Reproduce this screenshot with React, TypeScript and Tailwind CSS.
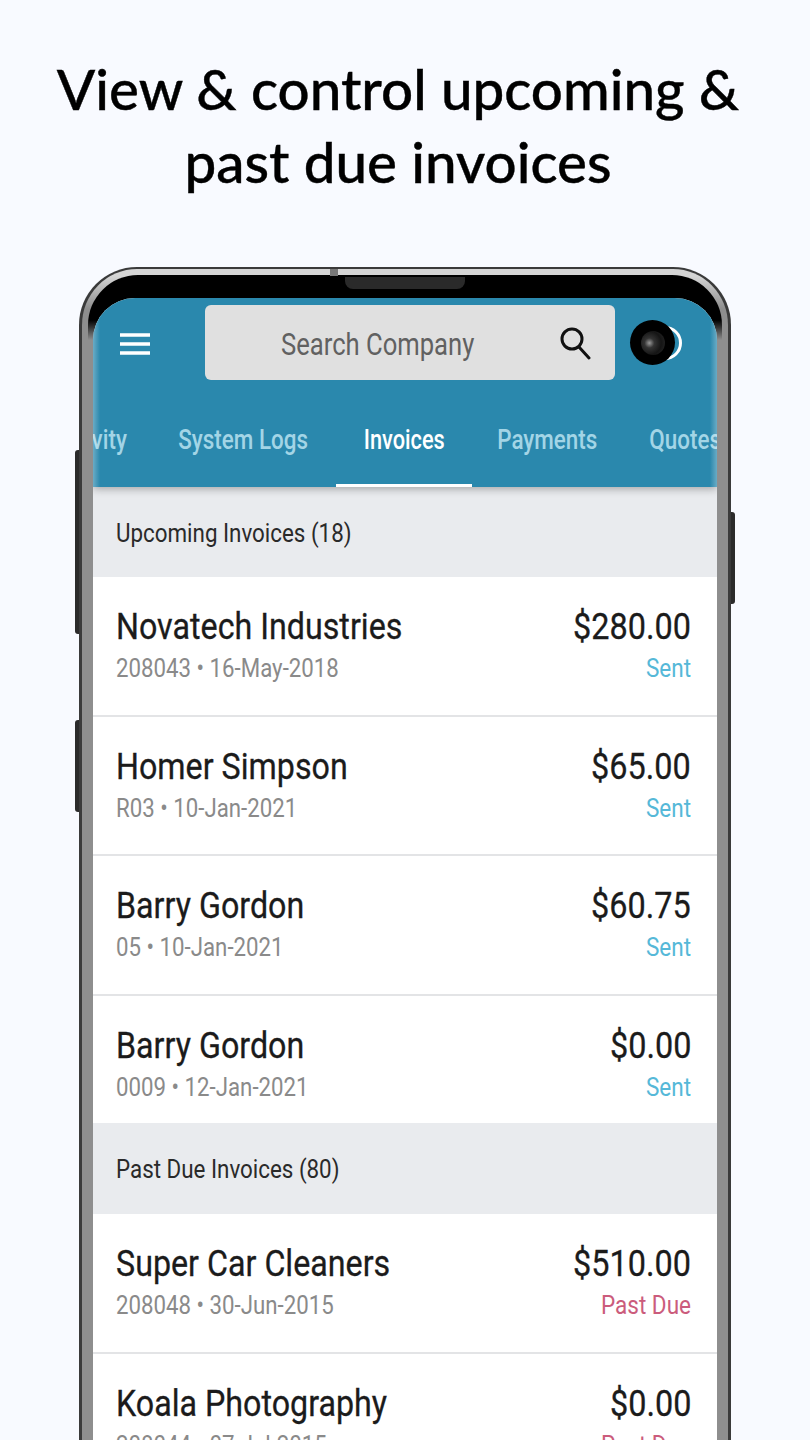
const upcoming = [
  { name: 'Novatech Industries', meta: '208043 • 16-May-2018', amount: '$280.00' },
  { name: 'Homer Simpson', meta: 'R03 • 10-Jan-2021', amount: '$65.00' },
  { name: 'Barry Gordon', meta: '05 • 10-Jan-2021', amount: '$60.75' },
  { name: 'Barry Gordon', meta: '0009 • 12-Jan-2021', amount: '$0.00' },
];

const pastDue = [
  { name: 'Super Car Cleaners', meta: '208048 • 30-Jun-2015', amount: '$510.00' },
  { name: 'Koala Photography', meta: '208044 • 07-Jul-2015', amount: '$0.00' },
];

const tabs = [
  { label: 'vity', w: 'w-[37px] justify-end', active: false },
  { label: 'System Logs', w: 'w-[206px] justify-center pl-[20px]', active: false },
  { label: 'Invoices', w: 'w-[136px] justify-center', active: true },
  { label: 'Payments', w: 'w-[150px] justify-center', active: false },
  { label: 'Quotes', w: 'w-[95px] justify-start pl-[20px]', active: false },
];

const Row = ({ item, status, statusColor, last, short }: { item: { name: string; meta: string; amount: string }; status: string; statusColor: string; last?: boolean; short?: boolean }) => (
  <div className={`flex justify-between bg-white pl-[23px] pr-[26px] pt-[26px] ${short ? 'h-[127.5px]' : 'h-[139.5px]'} ${last ? '' : 'border-b-2 border-[#e3e4e6]'}`}>
    <div className="flex flex-col">
      <span className="origin-left scale-x-[0.895] whitespace-nowrap text-[36px] leading-[48px] text-[#1b1b1b] [-webkit-text-stroke:0.3px_#1b1b1b]">{item.name}</span>
      <span className="origin-left scale-x-[0.89] whitespace-nowrap text-[25px] leading-[35px] text-[#8a8a8a]">{item.meta}</span>
    </div>
    <div className="flex flex-col items-end">
      <span className="origin-right scale-x-[0.9] whitespace-nowrap text-[36px] leading-[48px] text-[#1b1b1b] [-webkit-text-stroke:0.3px_#1b1b1b]">{item.amount}</span>
      <span className={`origin-right scale-x-[0.9] whitespace-nowrap text-[25px] leading-[35px] ${statusColor}`}>{status}</span>
    </div>
  </div>
);

const SectionHead = ({ text, h }: { text: string; h: string }) => (
  <div className={`flex ${h} items-center bg-[#e9ebee] pl-[23px]`}>
    <span className="origin-left translate-y-[1px] scale-x-[0.86] whitespace-nowrap text-[26px] text-[#2a2a2a]">{text}</span>
  </div>
);

export default function App() {
  return (
    <div className="relative h-[1440px] w-[810px] overflow-hidden bg-[#f8faff] font-['Roboto',sans-serif]">
      <h1 className="pr-[14px] pt-[52px] text-center font-['Lato',sans-serif] text-[56.5px] font-medium leading-[73px] text-black [-webkit-text-stroke:0.4px_black]">
        View &amp; control upcoming &amp;
        <br />
        past due invoices
      </h1>

      {/* side buttons */}
      <div className="absolute left-[75px] top-[450px] h-[184px] w-[5px] rounded-l-[3px] bg-[#2b2b2b]" />
      <div className="absolute left-[75px] top-[720px] h-[92px] w-[5px] rounded-l-[3px] bg-[#2b2b2b]" />
      <div className="absolute left-[730px] top-[512px] h-[92px] w-[5px] rounded-r-[3px] bg-[#2b2b2b]" />

      <div className="relative ml-[79px] mt-[69px] h-[1300px] w-[652px] rounded-t-[58px] border-x-[3px] border-t-[2px] border-[#3a3a3a] bg-[linear-gradient(to_bottom,#d5d5d5_0,#d5d5d5_7px,#8e8e8e_40px)] px-[11px] pt-[6px]">
        <div className="-mx-[5px] h-full rounded-t-[50px] bg-[linear-gradient(to_bottom,#000_0,#000_45px,#8e8e8e_65px)] px-[5px] pt-[23px]">
          <div className="relative h-[1200px] overflow-hidden rounded-t-[42px] bg-white">
            {/* app bar */}
            <div className="relative z-10 h-[189px] bg-[#2a88ad] shadow-[0_2px_8px_rgba(0,0,0,0.3)]">
              <div className="flex h-[131px] items-start pt-[7px]">
                <svg className="ml-[27px] mt-[27px]" width="30" height="24" viewBox="0 0 30 24">
                  <path d="M0 3h30M0 12h30M0 21h30" stroke="#fff" strokeWidth="3.5" />
                </svg>
                <div className="ml-[55px] flex h-[75px] w-[410px] items-center rounded-[6px] bg-[#e0e0e0] pl-[76px] pr-[23px]">
                  <span className="flex-1 origin-left translate-y-[3px] scale-x-[0.826] whitespace-nowrap text-[31px] text-[#616161]">Search Company</span>
                  <svg width="32" height="34" viewBox="0 0 32 34" fill="none" stroke="#111" strokeWidth="3">
                    <circle cx="12" cy="13" r="10" />
                    <path d="M19 21l10 11" strokeLinecap="round" />
                  </svg>
                </div>
                <svg className="ml-[12px] mt-[12px]" width="56" height="50" viewBox="0 0 56 50">
                  <circle cx="38" cy="26" r="15.5" fill="none" stroke="#fff" strokeWidth="3" />
                </svg>
              </div>
              <div className="flex h-[58px] items-start">
                {tabs.map((t) => (
                  <div key={t.label} className={`flex h-full shrink-0 ${t.w} ${t.active ? 'border-b-[3px] border-white' : ''}`}>
                    <span className={`whitespace-nowrap text-[27px] font-medium leading-[22px] ${t.active ? 'scale-x-[0.805] text-white' : 'scale-x-[0.83] text-[#a3d5e6]'}`}>{t.label}</span>
                  </div>
                ))}
              </div>
            </div>

            <SectionHead text="Upcoming Invoices (18)" h="h-[90px]" />
            {upcoming.map((item, i) => (
              <Row key={i} item={item} status="Sent" statusColor="text-[#55b8d8]" last={i === upcoming.length - 1} short={i === upcoming.length - 1} />
            ))}
            <SectionHead text="Past Due Invoices (80)" h="h-[91px]" />
            {pastDue.map((item, i) => (
              <Row key={i} item={item} status="Past Due" statusColor="text-[#cb5c7c]" last={i === pastDue.length - 1} />
            ))}

            {/* curved screen edges */}
            <div className="absolute left-0 top-0 z-20 h-[189px] w-[7px] bg-gradient-to-r from-white/30 to-transparent" />
            <div className="absolute right-0 top-0 z-20 h-[189px] w-[7px] bg-gradient-to-l from-white/30 to-transparent" />

            {/* camera hole */}
            <div className="absolute left-[537px] top-[22px] z-20 flex h-[45px] w-[45px] items-center justify-center rounded-full bg-black">
              <div className="h-[24px] w-[24px] rounded-full bg-[radial-gradient(circle_at_35%_50%,#999_0,#333_25%,#151515_60%,#2a2a2a_100%)]" />
            </div>
          </div>
        </div>
        {/* speaker notch */}
        <div className="absolute left-[263px] top-[8px] h-[12px] w-[120px] rounded-b-[8px] bg-[#2a2a2a]" />
        <div className="absolute left-[248px] top-0 h-[7px] w-[8px] bg-[#777]" />
      </div>
    </div>
  );
}
